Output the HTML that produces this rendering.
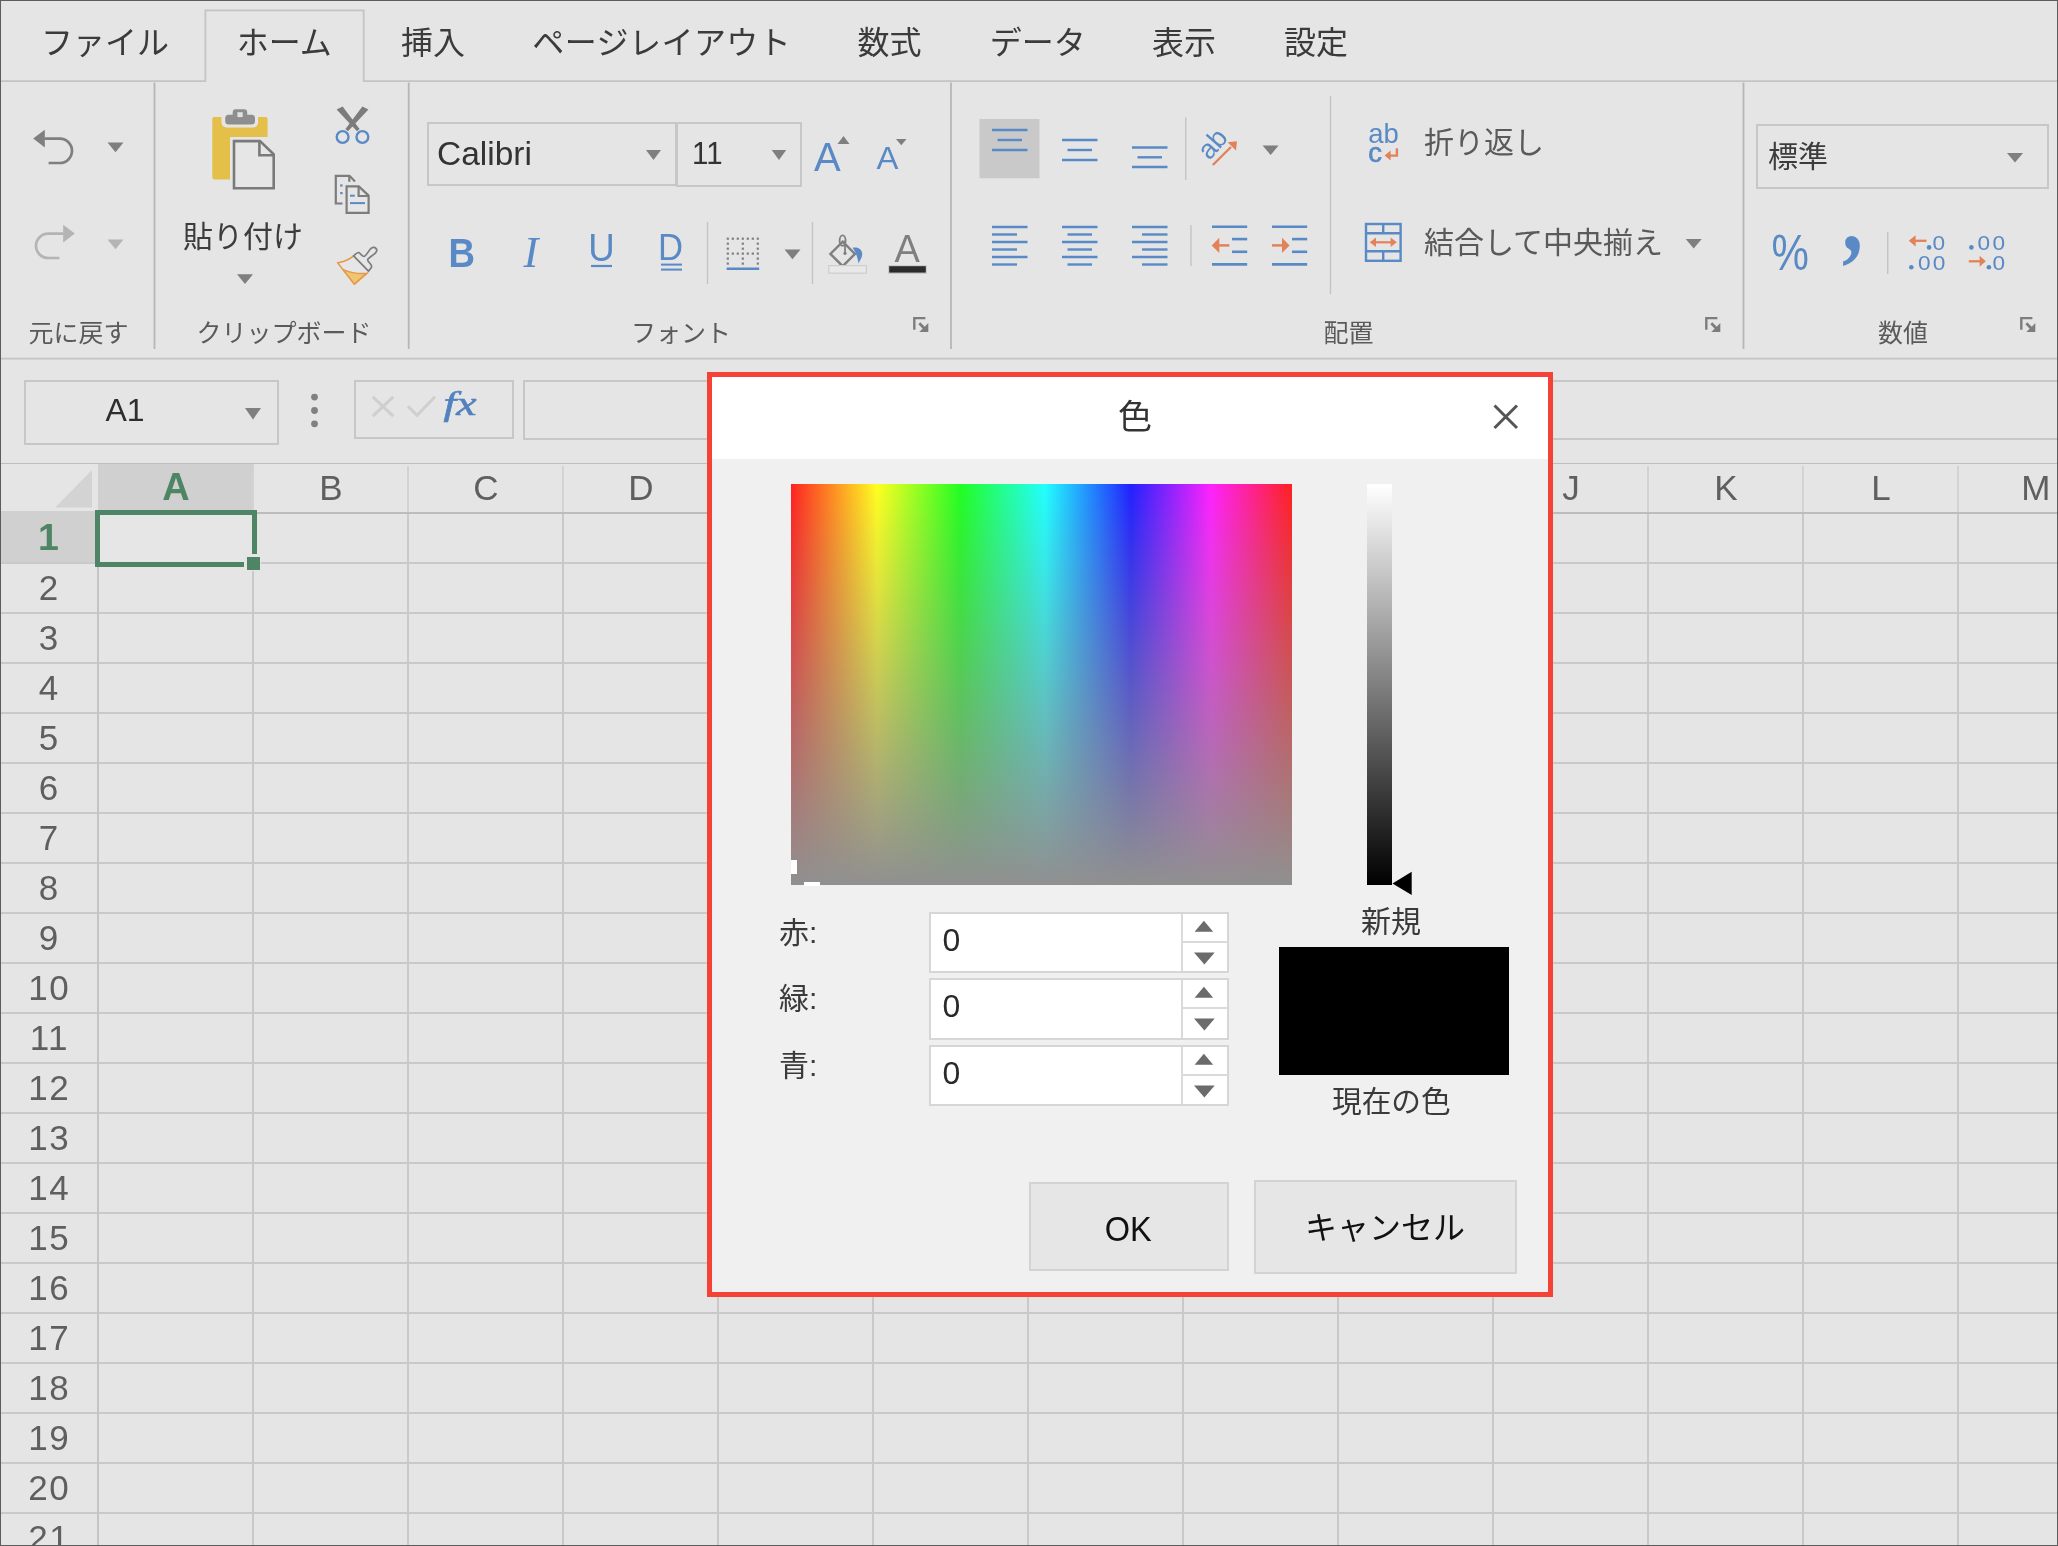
<!DOCTYPE html>
<html lang="ja"><head><meta charset="utf-8"><title>色</title>
<style>
*{box-sizing:border-box;margin:0;padding:0}
html,body{width:2058px;height:1546px;background:#e5e5e5}
body{font-family:"Liberation Sans","Noto Sans CJK JP",sans-serif;color:#3c3c3c}
#app{position:absolute;left:0;top:0;width:2058px;height:1546px;overflow:hidden;will-change:transform}
.t{position:absolute;white-space:nowrap;line-height:1}
.tab{font-size:32px;color:#3b3b3b;top:26.5px}
.gl{font-size:25px;color:#5a5a5a;top:321.3px}
.bx{position:absolute;border:2px solid #c7c7c7}
svg{position:absolute;left:0;top:0;overflow:visible}
svg text{font-family:"Liberation Sans","Noto Sans CJK JP",sans-serif}
.ch{position:absolute;top:464.2px;height:48px;width:155px;text-align:center;font-size:35px;line-height:48px;color:#5f5f5f}
.rh{position:absolute;left:0;width:97px;height:50px;text-align:center;font-size:35px;line-height:50px;color:#5f5f5f;letter-spacing:1.4px;padding-left:1.4px}
#dlg{position:absolute;left:707px;top:372px;width:846px;height:924.5px;border:5px solid #f44336;background:#f0f0f0}
#dlg .ttl{position:absolute;left:0;top:0;width:836px;height:82px;background:#fff}
.inp{position:absolute;left:217px;width:300.2px;height:61.4px;background:#fff;border:2px solid #d6d6d6}
.inp .v{position:absolute;left:11.5px;top:10px;font-size:32px;line-height:1;color:#2a2a2a}
.inp .sp{position:absolute;left:249.5px;top:0;width:2px;height:57.4px;background:#dadada}
.inp .mid{position:absolute;left:251.4px;top:27px;width:45.3px;height:2px;background:#dadada}
.btn{position:absolute;background:#e6e6e6;border:2px solid #d3d3d3;text-align:center;color:#111;font-size:32px}
.dl{position:absolute;font-size:30px;line-height:1;color:#3a3a3a;white-space:nowrap}
</style></head>
<body>
<div id="app">
<div class="t tab" style="left:41px">ファイル</div>
<div class="t tab" style="left:236.7px">ホーム</div>
<div class="t tab" style="left:401px">挿入</div>
<div class="t tab" style="left:532.3px;letter-spacing:0.45px">ページレイアウト</div>
<div class="t tab" style="left:857.5px">数式</div>
<div class="t tab" style="left:989.7px">データ</div>
<div class="t tab" style="left:1152px">表示</div>
<div class="t tab" style="left:1284px">設定</div>
<div class="t gl" style="left:28.5px">元に戻す</div>
<div class="t gl" style="left:196.5px">クリップボード</div>
<div class="t gl" style="left:631px">フォント</div>
<div class="t gl" style="left:1323.5px">配置</div>
<div class="t gl" style="left:1878px">数値</div>
<div class="t" style="left:183px;top:222.2px;font-size:30px;color:#3c3c3c">貼り付け</div>
<div class="bx" style="left:426.5px;top:121.5px;width:250.2px;height:64.5px"></div>
<div class="bx" style="left:676px;top:122px;width:126px;height:64.7px"></div>
<div class="t" style="left:437px;top:136.5px;font-size:33.5px;color:#333">Calibri</div>
<div class="t" style="left:691.5px;top:137px;font-size:32px;color:#333;transform:scaleX(0.92);transform-origin:0 0">11</div>
<div class="t" style="left:1424px;top:128.2px;font-size:30px;color:#5a5a5a">折り返し</div>
<div class="t" style="left:1424px;top:228px;font-size:30px;color:#5a5a5a">結合して中央揃え</div>
<div class="bx" style="left:1756px;top:124px;width:292.5px;height:65px"></div>
<div class="t" style="left:1768px;top:141.5px;font-size:30px;color:#3c3c3c">標準</div>
<div class="bx" style="left:24px;top:380px;width:255px;height:64.7px"></div>
<div class="t" style="left:105.5px;top:393.5px;font-size:32px;color:#2e2e2e">A1</div>
<div class="bx" style="left:354px;top:380px;width:159.9px;height:59.4px"></div>
<div class="bx" style="left:523.4px;top:380px;width:1545px;height:60.4px"></div>
<div style="position:absolute;left:98px;top:464px;width:156px;height:46px;background:#d0d0d0"></div>
<div style="position:absolute;left:0;top:511px;width:97px;height:53px;background:#d0d0d0"></div>
<div style="position:absolute;left:0;top:514px;width:2058px;height:1032px;
background:
 linear-gradient(to right, transparent 0, transparent 0.4px, #c9c9c9 0.4px, #c9c9c9 2.4px, transparent 2.4px) 97px 0/155px 100% repeat-x,
 linear-gradient(to bottom, transparent 0, transparent 0.4px, #c9c9c9 0.4px, #c9c9c9 2.4px, transparent 2.4px) 0 48px/100% 50px repeat-y"></div>
<div style="position:absolute;left:0;top:462.5px;width:2058px;height:1.6px;background:#bdbdbd"></div>
<div style="position:absolute;left:257px;top:512px;width:1801px;height:2.4px;background:#bcbcbc"></div>
<div style="position:absolute;left:252.4px;top:466px;width:2px;height:46px;background:#d3d3d3"></div>
<div style="position:absolute;left:407.4px;top:466px;width:2px;height:46px;background:#d3d3d3"></div>
<div style="position:absolute;left:562.4px;top:466px;width:2px;height:46px;background:#d3d3d3"></div>
<div style="position:absolute;left:717.4px;top:466px;width:2px;height:46px;background:#d3d3d3"></div>
<div style="position:absolute;left:872.4px;top:466px;width:2px;height:46px;background:#d3d3d3"></div>
<div style="position:absolute;left:1027.4px;top:466px;width:2px;height:46px;background:#d3d3d3"></div>
<div style="position:absolute;left:1182.4px;top:466px;width:2px;height:46px;background:#d3d3d3"></div>
<div style="position:absolute;left:1337.4px;top:466px;width:2px;height:46px;background:#d3d3d3"></div>
<div style="position:absolute;left:1492.4px;top:466px;width:2px;height:46px;background:#d3d3d3"></div>
<div style="position:absolute;left:1647.4px;top:466px;width:2px;height:46px;background:#d3d3d3"></div>
<div style="position:absolute;left:1802.4px;top:466px;width:2px;height:46px;background:#d3d3d3"></div>
<div style="position:absolute;left:1957.4px;top:466px;width:2px;height:46px;background:#d3d3d3"></div>
<div style="position:absolute;left:97.4px;top:514px;width:2px;height:1032px;background:#c4c4c4"></div>
<div class="ch" style="left:98.4px;color:#4e8564;font-weight:bold;font-size:38px;top:463.3px">A</div>
<div class="ch" style="left:253.4px">B</div>
<div class="ch" style="left:408.4px">C</div>
<div class="ch" style="left:563.4px">D</div>
<div class="ch" style="left:718.4px">E</div>
<div class="ch" style="left:873.4px">F</div>
<div class="ch" style="left:1028.4px">G</div>
<div class="ch" style="left:1183.4px">H</div>
<div class="ch" style="left:1338.4px">I</div>
<div class="ch" style="left:1493.4px">J</div>
<div class="ch" style="left:1648.4px">K</div>
<div class="ch" style="left:1803.4px">L</div>
<div class="ch" style="left:1958.4px">M</div>
<div class="rh" style="top:512.4px;color:#4e8564;font-weight:bold;font-size:37.5px;letter-spacing:0;padding-left:0">1</div>
<div class="rh" style="top:563.4px">2</div>
<div class="rh" style="top:613.4px">3</div>
<div class="rh" style="top:663.4px">4</div>
<div class="rh" style="top:713.4px">5</div>
<div class="rh" style="top:763.4px">6</div>
<div class="rh" style="top:813.4px">7</div>
<div class="rh" style="top:863.4px">8</div>
<div class="rh" style="top:913.4px">9</div>
<div class="rh" style="top:963.4px">10</div>
<div class="rh" style="top:1013.4px">11</div>
<div class="rh" style="top:1063.4px">12</div>
<div class="rh" style="top:1113.4px">13</div>
<div class="rh" style="top:1163.4px">14</div>
<div class="rh" style="top:1213.4px">15</div>
<div class="rh" style="top:1263.4px">16</div>
<div class="rh" style="top:1313.4px">17</div>
<div class="rh" style="top:1363.4px">18</div>
<div class="rh" style="top:1413.4px">19</div>
<div class="rh" style="top:1463.4px">20</div>
<div class="rh" style="top:1513.4px">21</div>
<div style="position:absolute;left:94.5px;top:509.5px;width:162.5px;height:57.5px;border:5px solid #4e8564;background:#e6e6e6"></div>
<div style="position:absolute;left:244px;top:554px;width:17px;height:17px;background:#e5e5e5"></div>
<div style="position:absolute;left:246.5px;top:556.5px;width:13.5px;height:13.5px;background:#4e8564"></div>
<svg width="2058" height="1546" viewBox="0 0 2058 1546">
<path d="M0 81.1H205.4V10.4H363.7V81.1H2058" stroke="#c4c4c4" stroke-width="1.8" fill="none"/>
<path d="M0 358.7H2058" stroke="#c4c4c4" stroke-width="1.8" fill="none"/>
<path d="M154.5 82.5V349" stroke="#b6b6b6" stroke-width="1.8" fill="none"/>
<path d="M408.7 82.5V349" stroke="#b6b6b6" stroke-width="1.8" fill="none"/>
<path d="M951 82.5V349" stroke="#b6b6b6" stroke-width="1.8" fill="none"/>
<path d="M1743.5 82.5V349" stroke="#b6b6b6" stroke-width="1.8" fill="none"/>
<path d="M707.5 222V284" stroke="#c4c4c4" stroke-width="1.4" fill="none"/>
<path d="M812.5 222V284" stroke="#c4c4c4" stroke-width="1.4" fill="none"/>
<path d="M1185.7 117.5V180" stroke="#c4c4c4" stroke-width="1.4" fill="none"/>
<path d="M1191 225V266" stroke="#c4c4c4" stroke-width="1.4" fill="none"/>
<path d="M1330.5 96V294" stroke="#c4c4c4" stroke-width="1.4" fill="none"/>
<path d="M1887.7 232V274" stroke="#c4c4c4" stroke-width="1.4" fill="none"/>
<path d="M44.5 138.6H59.8A12.2 12.2 0 0 1 59.8 163H48.6" stroke="#7f7f7f" stroke-width="2.7" fill="none"/>
<path d="M33.2 138.6L44.8 129.8V147.4Z" fill="#7f7f7f"/>
<path d="M107.5 142.6H123.5L115.5 152.2Z" fill="#7f7f7f"/>
<path d="M63.5 233.6H48.2A12.2 12.2 0 0 0 48.2 258H59.4" stroke="#b4b4b4" stroke-width="2.7" fill="none"/>
<path d="M74.8 233.6L63.2 224.8V242.4Z" fill="#b4b4b4"/>
<path d="M107.5 239.6H123.5L115.5 249.2Z" fill="#b4b4b4"/>
<path d="M214.3 117.1H265.6A2 2 0 0 1 267.6 119.1V136.9H230V179.6H214.3A2 2 0 0 1 212.3 177.6V119.1A2 2 0 0 1 214.3 117.1Z" fill="#e4c04a"/>
<rect x="221.5" y="106" width="36.6" height="21.4" rx="5" fill="#e5e5e5"/>
<rect x="225.2" y="114.7" width="29.8" height="9.8" rx="3.5" fill="#8e8e8e"/>
<rect x="232.7" y="109.3" width="14.5" height="10" rx="3" fill="#8e8e8e"/>
<rect x="237.4" y="112.2" width="5.3" height="4.9" fill="#e0e0e0"/>
<path d="M234 141.1H260L273.7 154.3V188.3H234Z" fill="#e6e6e6" stroke="#7a7a7a" stroke-width="2.6" stroke-linejoin="miter"/>
<path d="M259.4 141.1V155.3H273.7" fill="none" stroke="#7a7a7a" stroke-width="2.6"/>
<path d="M237 274.2H253L245.0 284Z" fill="#7f7f7f"/>
<path d="M342.6 106.6L336.6 109.6L357 131.2L359.6 128.9Z" fill="#7c7c7c"/>
<path d="M362.4 106.6L368.4 109.6L348 131.2L345.4 128.9Z" fill="#7c7c7c"/>
<circle cx="342.6" cy="137" r="5.9" fill="none" stroke="#5a8ac6" stroke-width="2.4"/>
<circle cx="362.4" cy="137" r="5.9" fill="none" stroke="#5a8ac6" stroke-width="2.4"/>
<path d="M342.5 203.5H335.8V175.8H349.5L355 181.5" fill="none" stroke="#7c7c7c" stroke-width="2.2"/>
<path d="M349.3 175.8V181.8" fill="none" stroke="#7c7c7c" stroke-width="2.2"/>
<path d="M346.6 186.4H358.8L368.6 195.6V212.8H346.6Z" fill="#e6e6e6" stroke="#7c7c7c" stroke-width="2.2"/>
<path d="M358.6 186.4V196H368.6" fill="none" stroke="#7c7c7c" stroke-width="2.2"/>
<rect x="340.2" y="184.4" width="2.4" height="2.2" fill="#5a8ac6"/><rect x="340.2" y="192" width="2.4" height="2.2" fill="#5a8ac6"/>
<path d="M350 195.7H354.8" stroke="#5a8ac6" stroke-width="2" fill="none"/>
<path d="M350 203.1H365" stroke="#5a8ac6" stroke-width="2" fill="none"/>
<g transform="translate(330 240)"><path d="M23.6 15.9C17 21.5 12.5 21.8 7.6 22.8L24.3 44.1L38.3 32.2" fill="#e6e6e6" stroke="#e39a4c" stroke-width="1.5" stroke-linejoin="round"/><path d="M13.2 29.6C20 32.5 28 34 36.5 33.4L24.3 44.1Z" fill="#efc66e" stroke="#e39a4c" stroke-width="1.5" stroke-linejoin="round"/><path d="M23.6 15.9C25.5 14 27.5 12 28.8 12.6C30.5 13.5 32.5 16.8 34.2 16.5C36 16 38.5 11 40.8 8.7C42.3 7.1 44.6 6.9 45.9 8.3C47.3 9.8 46.8 11.5 45.5 12.8C43 15.3 38.8 17.7 37.8 19.2C37 20.5 38.8 22 40.3 23.8C41.6 25.4 42.2 26.4 41.2 27.8L38.5 31.1Z" fill="#e6e6e6" stroke="#7c7c7c" stroke-width="1.7" stroke-linejoin="round"/></g>
<text x="814" y="171" font-size="40" fill="#5a8ac6">A</text>
<path d="M837.5 144H849.5L843.5 136Z" fill="#7f7f7f"/>
<text x="876.5" y="169" font-size="30.5" fill="#5a8ac6" transform="translate(876.5 0) scale(1.08 1) translate(-876.5 0)">A</text>
<path d="M896 139H906.5L901.25 145.2Z" fill="#7f7f7f"/>
<path d="M646 150H661L653.5 160Z" fill="#7f7f7f"/>
<path d="M771.7 150H786.2L778.95 160Z" fill="#7f7f7f"/>
<text x="448.5" y="267.5" font-size="40" font-weight="bold" fill="#5a8ac6" transform="translate(448.5 0) scale(0.92 1) translate(-448.5 0)">B</text>
<text x="523.5" y="267.3" font-size="44.5" font-style="italic" fill="#5a8ac6" style="font-family:'Liberation Serif',serif">I</text>
<text x="588.3" y="261" font-size="39" fill="#5a8ac6" transform="translate(588.3 0) scale(0.94 1) translate(-588.3 0)">U</text>
<path d="M591 266H612" stroke="#5a8ac6" stroke-width="2.2" fill="none"/>
<text x="658" y="260" font-size="36.5" fill="#5a8ac6" transform="translate(658 0) scale(0.95 1) translate(-658 0)">D</text>
<path d="M661 264.6H682" stroke="#5a8ac6" stroke-width="2" fill="none"/>
<path d="M661 269.6H682" stroke="#5a8ac6" stroke-width="2" fill="none"/>
<rect x="726.7" y="237.6" width="2.2" height="2.2" fill="#7f7f7f"/>
<rect x="731.7" y="237.6" width="2.2" height="2.2" fill="#7f7f7f"/>
<rect x="736.7" y="237.6" width="2.2" height="2.2" fill="#7f7f7f"/>
<rect x="741.7" y="237.6" width="2.2" height="2.2" fill="#7f7f7f"/>
<rect x="746.7" y="237.6" width="2.2" height="2.2" fill="#7f7f7f"/>
<rect x="751.7" y="237.6" width="2.2" height="2.2" fill="#7f7f7f"/>
<rect x="756.7" y="237.6" width="2.2" height="2.2" fill="#7f7f7f"/>
<rect x="726.7" y="242.6" width="2.2" height="2.2" fill="#7f7f7f"/>
<rect x="741.7" y="242.6" width="2.2" height="2.2" fill="#7f7f7f"/>
<rect x="756.7" y="242.6" width="2.2" height="2.2" fill="#7f7f7f"/>
<rect x="726.7" y="247.6" width="2.2" height="2.2" fill="#7f7f7f"/>
<rect x="741.7" y="247.6" width="2.2" height="2.2" fill="#7f7f7f"/>
<rect x="756.7" y="247.6" width="2.2" height="2.2" fill="#7f7f7f"/>
<rect x="726.7" y="252.5" width="2.2" height="2.2" fill="#7f7f7f"/>
<rect x="731.7" y="252.5" width="2.2" height="2.2" fill="#7f7f7f"/>
<rect x="736.7" y="252.5" width="2.2" height="2.2" fill="#7f7f7f"/>
<rect x="741.7" y="252.5" width="2.2" height="2.2" fill="#7f7f7f"/>
<rect x="746.7" y="252.5" width="2.2" height="2.2" fill="#7f7f7f"/>
<rect x="751.7" y="252.5" width="2.2" height="2.2" fill="#7f7f7f"/>
<rect x="756.7" y="252.5" width="2.2" height="2.2" fill="#7f7f7f"/>
<rect x="726.7" y="257.5" width="2.2" height="2.2" fill="#7f7f7f"/>
<rect x="741.7" y="257.5" width="2.2" height="2.2" fill="#7f7f7f"/>
<rect x="756.7" y="257.5" width="2.2" height="2.2" fill="#7f7f7f"/>
<rect x="726.7" y="262.5" width="2.2" height="2.2" fill="#7f7f7f"/>
<rect x="741.7" y="262.5" width="2.2" height="2.2" fill="#7f7f7f"/>
<rect x="756.7" y="262.5" width="2.2" height="2.2" fill="#7f7f7f"/>
<path d="M726.6 268.8H759.2" stroke="#5a8ac6" stroke-width="2.6" fill="none"/>
<path d="M784.5 249.6H800.5L792.5 259.2Z" fill="#7f7f7f"/>
<path d="M842.7 241.6L855 253.9L842.7 266.2L830.4 253.9Z" fill="none" stroke="#7f7f7f" stroke-width="2.4" stroke-linejoin="miter"/>
<ellipse cx="842.6" cy="240.6" rx="3" ry="5.2" fill="none" stroke="#7f7f7f" stroke-width="1.8"/>
<path d="M845 240.5V253" stroke="#7f7f7f" stroke-width="1.8" fill="none"/><circle cx="845" cy="253.3" r="1.6" fill="#7f7f7f"/>
<path d="M852.6 247.8C858 246.5 862.5 249.5 862.2 254.5C862 258 860 260 858.6 263.4C857.6 258.5 856.8 254 852.6 247.8Z" fill="#5a8ac6"/>
<rect x="828.8" y="265.6" width="37.6" height="7.6" fill="#e8e8e8" stroke="#cdcdcd" stroke-width="1.2"/>
<text x="894.5" y="261.8" font-size="38" fill="#7f7f7f">A</text>
<rect x="888.6" y="265.6" width="37.8" height="7.6" fill="#2b2b2b" stroke="#cdcdcd" stroke-width="1.2"/>
<g transform="translate(913 317.5)" stroke="#7d7d7d" fill="none" stroke-width="2.4"><path d="M1.3 12.2V0.6H12.4"/><path d="M6.3 5.8L11.5 11" stroke-width="2.8"/><path d="M15.3 5.6V14.6H6.3Z" fill="#7d7d7d" stroke="none"/></g>
<g transform="translate(1705 317.5)" stroke="#7d7d7d" fill="none" stroke-width="2.4"><path d="M1.3 12.2V0.6H12.4"/><path d="M6.3 5.8L11.5 11" stroke-width="2.8"/><path d="M15.3 5.6V14.6H6.3Z" fill="#7d7d7d" stroke="none"/></g>
<g transform="translate(2020 317.5)" stroke="#7d7d7d" fill="none" stroke-width="2.4"><path d="M1.3 12.2V0.6H12.4"/><path d="M6.3 5.8L11.5 11" stroke-width="2.8"/><path d="M15.3 5.6V14.6H6.3Z" fill="#7d7d7d" stroke="none"/></g>
<rect x="979.5" y="119" width="60" height="59.3" fill="#c9c9c9"/>
<path d="M992 130H1027.5" stroke="#5a8ac6" stroke-width="2.4" fill="none"/>
<path d="M997.5 140H1022" stroke="#5a8ac6" stroke-width="2.4" fill="none"/>
<path d="M992 150H1027.5" stroke="#5a8ac6" stroke-width="2.4" fill="none"/>
<path d="M1062 140H1097.5" stroke="#5a8ac6" stroke-width="2.4" fill="none"/>
<path d="M1067.5 150H1092" stroke="#5a8ac6" stroke-width="2.4" fill="none"/>
<path d="M1062 160H1097.5" stroke="#5a8ac6" stroke-width="2.4" fill="none"/>
<path d="M1132 147.5H1167.5" stroke="#5a8ac6" stroke-width="2.4" fill="none"/>
<path d="M1137.5 157.3H1162" stroke="#5a8ac6" stroke-width="2.4" fill="none"/>
<path d="M1132 167H1167.5" stroke="#5a8ac6" stroke-width="2.4" fill="none"/>
<path d="M992 227H1027.5" stroke="#5a8ac6" stroke-width="2.4" fill="none"/>
<path d="M1062 227H1097.5" stroke="#5a8ac6" stroke-width="2.4" fill="none"/>
<path d="M1132 227H1167.5" stroke="#5a8ac6" stroke-width="2.4" fill="none"/>
<path d="M992 234.5H1017" stroke="#5a8ac6" stroke-width="2.4" fill="none"/>
<path d="M1067.5 234.5H1092" stroke="#5a8ac6" stroke-width="2.4" fill="none"/>
<path d="M1142 234.5H1167.5" stroke="#5a8ac6" stroke-width="2.4" fill="none"/>
<path d="M992 242H1027.5" stroke="#5a8ac6" stroke-width="2.4" fill="none"/>
<path d="M1062 242H1097.5" stroke="#5a8ac6" stroke-width="2.4" fill="none"/>
<path d="M1132 242H1167.5" stroke="#5a8ac6" stroke-width="2.4" fill="none"/>
<path d="M992 249.5H1017" stroke="#5a8ac6" stroke-width="2.4" fill="none"/>
<path d="M1067.5 249.5H1092" stroke="#5a8ac6" stroke-width="2.4" fill="none"/>
<path d="M1142 249.5H1167.5" stroke="#5a8ac6" stroke-width="2.4" fill="none"/>
<path d="M992 257H1027.5" stroke="#5a8ac6" stroke-width="2.4" fill="none"/>
<path d="M1062 257H1097.5" stroke="#5a8ac6" stroke-width="2.4" fill="none"/>
<path d="M1132 257H1167.5" stroke="#5a8ac6" stroke-width="2.4" fill="none"/>
<path d="M992 264.5H1017" stroke="#5a8ac6" stroke-width="2.4" fill="none"/>
<path d="M1067.5 264.5H1092" stroke="#5a8ac6" stroke-width="2.4" fill="none"/>
<path d="M1142 264.5H1167.5" stroke="#5a8ac6" stroke-width="2.4" fill="none"/>
<path d="M1212 226.8H1247.2" stroke="#5a8ac6" stroke-width="2.6" fill="none"/>
<path d="M1212 264.4H1247.2" stroke="#5a8ac6" stroke-width="2.6" fill="none"/>
<path d="M1232 239.1H1247.2" stroke="#5a8ac6" stroke-width="2.6" fill="none"/>
<path d="M1232 251.8H1247.2" stroke="#5a8ac6" stroke-width="2.6" fill="none"/>
<path d="M1218 245.4H1229.4" stroke="#e2825a" stroke-width="2.5"/><path d="M1211.7 245.4L1219.3 237.8V253Z" fill="#e2825a"/>
<path d="M1272 226.8H1307.2" stroke="#5a8ac6" stroke-width="2.6" fill="none"/>
<path d="M1272 264.4H1307.2" stroke="#5a8ac6" stroke-width="2.6" fill="none"/>
<path d="M1292 239.1H1307.2" stroke="#5a8ac6" stroke-width="2.6" fill="none"/>
<path d="M1292 251.8H1307.2" stroke="#5a8ac6" stroke-width="2.6" fill="none"/>
<path d="M1272 245.4H1283" stroke="#e2825a" stroke-width="2.5"/><path d="M1289.6 245.4L1282 237.8V253Z" fill="#e2825a"/>
<text x="0" y="0" font-size="27" fill="#5a8ac6" transform="translate(1209.5 161) rotate(-49)">ab</text>
<path d="M1212.8 165L1231 147" stroke="#e2825a" stroke-width="2.4" fill="none"/><path d="M1237 141.2L1236 150.6L1227.6 142.2Z" fill="#e2825a"/>
<path d="M1262.6 145.6H1278.6L1270.6 155Z" fill="#7f7f7f"/>
<text x="1368.2" y="143.2" font-size="27.5" fill="#5a8ac6">ab</text>
<text x="1368.2" y="162.3" font-size="27.5" fill="#5a8ac6" stroke="#5a8ac6" stroke-width="0.7">c</text>
<path d="M1396.9 148.3V155.6H1389" stroke="#e2825a" stroke-width="2.4" fill="none"/><path d="M1384.6 155.6L1390.6 150.6V160.6Z" fill="#e2825a"/>
<rect x="1366" y="224" width="34.6" height="36.8" fill="none" stroke="#5a8ac6" stroke-width="2.4"/>
<path d="M1366 233.2H1400.6" stroke="#5a8ac6" stroke-width="2.4" fill="none"/>
<path d="M1366 251.2H1400.6" stroke="#5a8ac6" stroke-width="2.4" fill="none"/>
<path d="M1383.2 224V233.2M1383.2 251.2V260.8" stroke="#5a8ac6" stroke-width="2.4"/>
<path d="M1374 242.3H1393" stroke="#e2825a" stroke-width="2.2"/><path d="M1369.8 242.3L1376 237.6V247Z" fill="#e2825a"/><path d="M1396.8 242.3L1390.6 237.6V247Z" fill="#e2825a"/>
<path d="M1685.7 239H1701.7L1693.7 248.4Z" fill="#7f7f7f"/>
<path d="M2007 153H2023L2015.0 162.6Z" fill="#7f7f7f"/>
<text x="1771.5" y="270" font-size="49.5" fill="#5a8ac6" transform="translate(1771.5 0) scale(0.85 1) translate(-1771.5 0)">%</text>
<text x="1842" y="251.5" font-size="100" font-weight="bold" fill="#5a8ac6" style="font-family:'Liberation Serif',serif" transform="translate(1842 0) scale(0.84 1) translate(-1842 0)">,</text>
<path d="M1914 240.8H1926.5" stroke="#e2825a" stroke-width="2.3"/><path d="M1908.8 240.8L1915.6 235.2V246.4Z" fill="#e2825a"/>
<circle cx="1929.1" cy="247.4" r="2.3" fill="#5a8ac6"/>
<text x="1938.9" y="249.7" font-size="21" text-anchor="middle" fill="#5a8ac6" transform="translate(1938.9 0) scale(1.08 1) translate(-1938.9 0)">0</text>
<circle cx="1911.3" cy="267.2" r="2.3" fill="#5a8ac6"/>
<text x="1924.2" y="269.8" font-size="21" text-anchor="middle" fill="#5a8ac6" transform="translate(1924.2 0) scale(1.08 1) translate(-1924.2 0)">0</text>
<text x="1939" y="269.8" font-size="21" text-anchor="middle" fill="#5a8ac6" transform="translate(1939 0) scale(1.08 1) translate(-1939 0)">0</text>
<circle cx="1971.4" cy="247.4" r="2.3" fill="#5a8ac6"/>
<text x="1983.8" y="249.7" font-size="21" text-anchor="middle" fill="#5a8ac6" transform="translate(1983.8 0) scale(1.08 1) translate(-1983.8 0)">0</text>
<text x="1998.8" y="249.7" font-size="21" text-anchor="middle" fill="#5a8ac6" transform="translate(1998.8 0) scale(1.08 1) translate(-1998.8 0)">0</text>
<path d="M1968.8 261.3H1981" stroke="#e2825a" stroke-width="2.3"/><path d="M1985.8 261.3L1979.6 255.8V266.8Z" fill="#e2825a"/>
<circle cx="1988.9" cy="267.3" r="2.3" fill="#5a8ac6"/>
<text x="1998.8" y="269.8" font-size="21" text-anchor="middle" fill="#5a8ac6" transform="translate(1998.8 0) scale(1.08 1) translate(-1998.8 0)">0</text>
<path d="M245 408H261L253.0 419.5Z" fill="#7f7f7f"/>
<circle cx="314.5" cy="397.1" r="3.4" fill="#808080"/>
<circle cx="314.5" cy="410.5" r="3.4" fill="#808080"/>
<circle cx="314.5" cy="423.8" r="3.4" fill="#808080"/>
<path d="M372.8 396.8L393.2 416.2M393.2 396.8L372.8 416.2" stroke="#cfcfcf" stroke-width="3" fill="none"/>
<path d="M408 406.2L417 415.4L435 396.8" stroke="#cfcfcf" stroke-width="3" fill="none"/>
<text x="443.5" y="415" font-size="33" font-style="italic" fill="#5282be" stroke="#5282be" stroke-width="0.6" style="font-family:'Liberation Serif',serif" transform="translate(443.5 0) scale(1.38 1) translate(-443.5 0)">fx</text>
<path d="M92 470V507.4H55Z" fill="#d3d3d3"/>
</svg>
<div id="dlg">
<div class="ttl"></div>
<div class="dl" style="left:406px;top:23.2px;font-size:34px;color:#333">色</div>
<div style="position:absolute;left:79px;top:107px;width:500.5px;height:400.5px;background:linear-gradient(to bottom, rgba(144,144,144,0) 0%, rgba(144,144,144,1) 100%), linear-gradient(to right,#ff2121 0%,#ffff21 17.2%,#21ff21 33.8%,#21ffff 50.7%,#2121ff 67.8%,#ff21ff 83.8%,#ff2121 100%)"></div>
<div style="position:absolute;left:79px;top:483px;width:6px;height:14px;background:#fff"></div>
<div style="position:absolute;left:92px;top:505px;width:16px;height:4px;background:#fff"></div>
<div style="position:absolute;left:655px;top:107px;width:24.7px;height:400.5px;background:linear-gradient(to bottom,#fff,#000)"></div>
<svg width="40" height="40" style="left:675px;top:490px" viewBox="0 0 40 40"><path d="M5.5 16.5L24.7 4.7V28Z" fill="#000"/></svg>
<div class="dl" style="left:649px;top:530px">新規</div>
<div style="position:absolute;left:567.2px;top:569.5px;width:229.5px;height:128.5px;background:#000"></div>
<div class="dl" style="left:620px;top:709.7px;font-size:29.7px">現在の色</div>
<div class="dl" style="left:67px;top:540.7px">赤:</div>
<div class="inp" style="top:534.5px"><div class="v">0</div><div class="sp"></div><div class="mid"></div><svg width="48" height="58" viewBox="250 0 48 58" style="left:250px;top:0"><path d="M263.6 17.8H282.2L272.9 6.7Z" fill="#6b6b6b"/><path d="M263 38.5H283.7L273.4 50.6Z" fill="#6b6b6b"/></svg></div>
<div class="dl" style="left:67px;top:607.4000000000001px">緑:</div>
<div class="inp" style="top:601.2px"><div class="v">0</div><div class="sp"></div><div class="mid"></div><svg width="48" height="58" viewBox="250 0 48 58" style="left:250px;top:0"><path d="M263.6 17.8H282.2L272.9 6.7Z" fill="#6b6b6b"/><path d="M263 38.5H283.7L273.4 50.6Z" fill="#6b6b6b"/></svg></div>
<div class="dl" style="left:67px;top:673.7px">青:</div>
<div class="inp" style="top:667.5px"><div class="v">0</div><div class="sp"></div><div class="mid"></div><svg width="48" height="58" viewBox="250 0 48 58" style="left:250px;top:0"><path d="M263.6 17.8H282.2L272.9 6.7Z" fill="#6b6b6b"/><path d="M263 38.5H283.7L273.4 50.6Z" fill="#6b6b6b"/></svg></div>
<div class="btn" style="left:316.6px;top:804.7px;width:200px;height:89.5px;line-height:90px;font-size:35px"><span style="display:inline-block;transform:scaleX(0.93)">OK</span></div>
<div class="btn" style="left:541.6px;top:803px;width:263px;height:94px;line-height:92px">キャンセル</div>
<svg width="30" height="30" viewBox="0 0 30 30" style="left:780px;top:26px"><path d="M2.5 2.5L25 25M25 2.5L2.5 25" stroke="#555" stroke-width="3" fill="none"/></svg>
</div>
<div style="position:absolute;left:0;top:0;width:2058px;height:1546px;border:1.5px solid #5c5c5c;pointer-events:none"></div>
</div>
</body></html>
